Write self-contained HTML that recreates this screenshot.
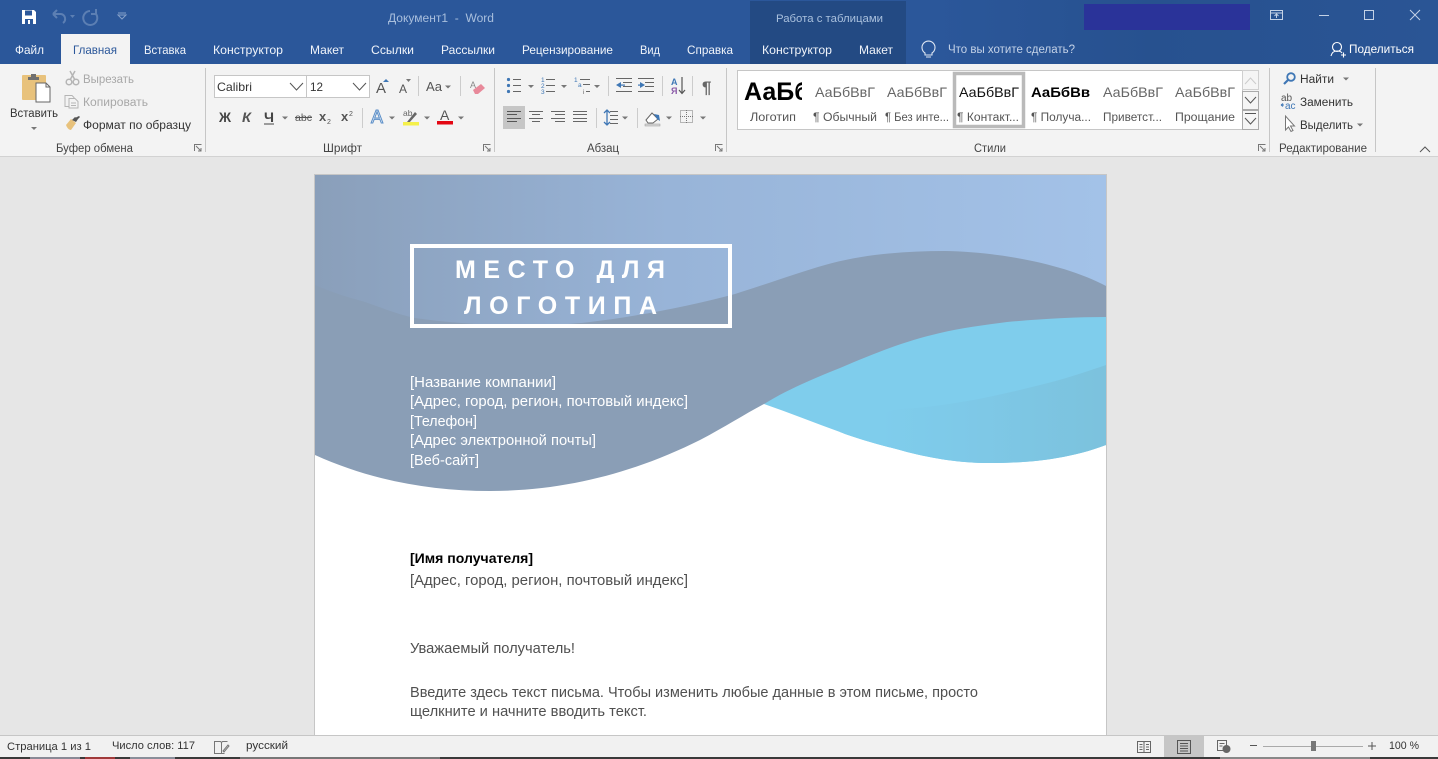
<!DOCTYPE html>
<html lang="ru"><head><meta charset="utf-8"><title>Документ1 - Word</title>
<style>
html,body{margin:0;padding:0;background:#e6e6e6;overflow:hidden;width:1438px;height:759px}
svg{display:block}
text{font-family:"Liberation Sans",sans-serif;font-size:11.5px;fill:#444;white-space:pre}
.tab{fill:#f0f4fa;font-size:12px}
.g{fill:#a8a8a8}
.d{fill:#333}
.lab{fill:#555;font-size:11.5px}
.grp{fill:#444;font-size:11.5px}
.body{font-size:14.5px;fill:#505050}
.wh{font-size:14.5px;fill:#fff}
</style></head><body>
<svg width="1438" height="759" viewBox="0 0 1438 759" xmlns="http://www.w3.org/2000/svg">
<defs>
<linearGradient id="bg" x1="0" x2="1" y1="0" y2="0"><stop offset="0" stop-color="#8a9fba"/><stop offset=".45" stop-color="#98b4d8"/><stop offset="1" stop-color="#a3c2e8"/></linearGradient>
<linearGradient id="tb" x1="0" x2="1" y1="0" y2="0"><stop offset="0" stop-color="#2b579a"/><stop offset=".65" stop-color="#2b579a"/><stop offset=".8" stop-color="#27518f"/><stop offset="1" stop-color="#2a5595"/></linearGradient>
<linearGradient id="band" gradientUnits="userSpaceOnUse" x1="880" x2="1106" y1="0" y2="0"><stop offset="0" stop-color="#7fcdec"/><stop offset=".35" stop-color="#7ec9e8"/><stop offset="1" stop-color="#7cc2dd"/></linearGradient>
<clipPath id="st"><rect x="740" y="72" width="62" height="40"/></clipPath>
</defs>

<!-- title bar -->
<rect x="0" y="0" width="1438" height="64" fill="url(#tb)"/>
<rect x="750" y="1" width="156" height="63" fill="#234a83"/>
<rect x="1084" y="4" width="166" height="26" fill="#2a3399"/>
<!-- save -->
<path d="M22 10h12l2 2v12H22z" fill="#fff"/><rect x="25" y="10.500" width="7" height="5" fill="#2b579a"/><rect x="25" y="19" width="8" height="5" fill="#2b579a"/><rect x="28" y="20" width="2" height="4" fill="#fff"/>
<!-- undo, redo, qat -->
<path d="M53 14l4-4M53 14l4 4M53 14h8a5 5 0 0 1 2 9" fill="none" stroke="#5c7fb3" stroke-width="2"/><path d="M70 15h5l-2.500 3z" fill="#5c7fb3"/>
<path d="M90 11a7 7 0 1 0 6 3M96 9v5h-5" fill="none" stroke="#5c7fb3" stroke-width="2"/>
<path d="M118 13h8M118 15h8l-4 4z" fill="none" stroke="#86a1c9"/>
<text x="388" y="22" textLength="106" lengthAdjust="spacingAndGlyphs" style="fill:#a9bfdd;font-size:11.500px">Документ1  -  Word</text>
<text x="776" y="22" textLength="107" lengthAdjust="spacingAndGlyphs" style="fill:#a9c0dd;font-size:11px">Работа с таблицами</text>
<!-- window controls -->
<rect x="1270.500" y="10.500" width="12" height="9" fill="none" stroke="#c4d2e6"/><path d="M1270 13h13M1276.500 18v-4M1274.500 16l2-2 2 2" fill="none" stroke="#c4d2e6"/>
<path d="M1319 15.500h10" stroke="#c4d2e6"/>
<rect x="1364.500" y="10.500" width="9" height="9" fill="none" stroke="#c4d2e6"/>
<path d="M1410 10l10 10M1420 10l-10 10" stroke="#c4d2e6"/>

<!-- tabs -->
<rect x="61" y="34" width="69" height="31" fill="#f3f3f3"/>
<text class="tab" x="15" y="54" textLength="29" lengthAdjust="spacingAndGlyphs">Файл</text>
<text class="tab" x="73" y="54" textLength="44" lengthAdjust="spacingAndGlyphs" style="fill:#2b579a">Главная</text>
<text class="tab" x="144" y="54" textLength="42" lengthAdjust="spacingAndGlyphs">Вставка</text>
<text class="tab" x="213" y="54" textLength="70" lengthAdjust="spacingAndGlyphs">Конструктор</text>
<text class="tab" x="310" y="54" textLength="34" lengthAdjust="spacingAndGlyphs">Макет</text>
<text class="tab" x="371" y="54" textLength="43" lengthAdjust="spacingAndGlyphs">Ссылки</text>
<text class="tab" x="441" y="54" textLength="54" lengthAdjust="spacingAndGlyphs">Рассылки</text>
<text class="tab" x="522" y="54" textLength="91" lengthAdjust="spacingAndGlyphs">Рецензирование</text>
<text class="tab" x="640" y="54" textLength="20" lengthAdjust="spacingAndGlyphs">Вид</text>
<text class="tab" x="687" y="54" textLength="46" lengthAdjust="spacingAndGlyphs">Справка</text>
<text class="tab" x="762" y="54" textLength="70" lengthAdjust="spacingAndGlyphs">Конструктор</text>
<text class="tab" x="859" y="54" textLength="34" lengthAdjust="spacingAndGlyphs">Макет</text>
<path d="M925 53a6.500 6.500 0 1 1 7 0v2h-7zM926 57h5" fill="none" stroke="#dfe7f3" stroke-width="1.100"/>
<text x="948" y="53" textLength="127" lengthAdjust="spacingAndGlyphs" style="fill:#c5d3e8;font-size:11.500px">Что вы хотите сделать?</text>
<circle cx="1337" cy="47" r="4.500" fill="none" stroke="#fff" stroke-width="1.100"/><path d="M1331 56c1-4 3-5 6-5s4 .5 5 2M1341 55h5M1343.500 52.500v5" fill="none" stroke="#fff" stroke-width="1.100"/>
<text x="1349" y="53" textLength="65" lengthAdjust="spacingAndGlyphs" style="fill:#fff;font-size:12px">Поделиться</text>

<!-- ribbon -->
<rect x="0" y="64" width="1438" height="92" fill="#f3f3f3"/>
<rect x="0" y="156" width="1438" height="1" fill="#d2d2d2"/>
<g fill="#c6c6c6"><rect x="205" y="68" width="1" height="84"/><rect x="494" y="68" width="1" height="84"/><rect x="726" y="68" width="1" height="84"/><rect x="1269" y="68" width="1" height="84"/><rect x="1375" y="68" width="1" height="84"/></g>

<!-- paste -->
<rect x="22" y="75" width="24" height="25" rx="1" fill="#e8c27c"/>
<path d="M28 77h3v-3h5v3h3v3H28z" fill="#6f6f6f"/>
<path d="M36 83h10l4 4v15H36z" fill="#fff" stroke="#666"/><path d="M46 83v4h4" fill="none" stroke="#666"/>
<text x="10" y="117" textLength="48" lengthAdjust="spacingAndGlyphs" class="d">Вставить</text>
<path d="M31 127h6l-3 3z" fill="#777"/>
<!-- scissors -->
<g fill="none" stroke="#b5b5b5" stroke-width="1.500"><circle cx="69" cy="82" r="2.800"/><circle cx="76" cy="82" r="2.800"/><path d="M70 80l5-9M75 80l-5-9"/></g>
<text x="83" y="83" textLength="51" lengthAdjust="spacingAndGlyphs" class="g">Вырезать</text>
<!-- copy -->
<g fill="#f3f3f3" stroke="#b5b5b5"><path d="M65 95.500h7l2 2v9h-9z"/><path d="M69 98.500h6l3 3v6.500h-9z"/></g><path d="M71 103h5M71 105.500h5" stroke="#b5b5b5"/>
<text x="83" y="106" textLength="65" lengthAdjust="spacingAndGlyphs" class="g">Копировать</text>
<!-- brush -->
<path d="M66 125l5-6 5 4-5 7c-2 0-4-2-5-5z" fill="#e8c27c"/><path d="M72 120l3-3 3 2-2 3zM75 118l4-2 1 1-3 3z" fill="#555"/>
<text x="83" y="129" textLength="108" lengthAdjust="spacingAndGlyphs" class="d">Формат по образцу</text>
<text class="grp" x="56" y="152" textLength="77" lengthAdjust="spacingAndGlyphs">Буфер обмена</text>
<g fill="none" stroke="#777"><path d="M194.500 151v-6.500h7M196 146l5 5M201 148v3h-3"/><path d="M483.500 151v-6.500h7M485 146l5 5M490 148v3h-3"/><path d="M715.500 151v-6.500h7M717 146l5 5M722 148v3h-3"/><path d="M1258.500 151v-6.500h7M1260 146l5 5M1265 148v3h-3"/></g>

<!-- font -->
<rect x="214.500" y="75.500" width="92" height="22" fill="#fff" stroke="#c6c6c6"/>
<rect x="306.500" y="75.500" width="63" height="22" fill="#fff" stroke="#c6c6c6"/>
<text x="217" y="91" textLength="35" lengthAdjust="spacingAndGlyphs" class="d" style="font-size:12px">Calibri</text>
<text x="310" y="91" textLength="13" lengthAdjust="spacingAndGlyphs" class="d" style="font-size:12px">12</text>
<path d="M290 83l6.500 7 6.500-7M353 83l6.500 7 6.500-7" fill="none" stroke="#555"/>
<text x="376" y="93" style="font-size:15px;fill:#555">A</text><path d="M383 82l3-3 3 3z" fill="#3f77b5"/>
<text x="399" y="93" style="font-size:12px;fill:#555">A</text><path d="M406 79h5l-2.500 3z" fill="#777"/>
<rect x="418" y="76" width="1" height="20" fill="#ccc"/>
<text x="426" y="91" textLength="16" lengthAdjust="spacingAndGlyphs" style="font-size:13px;fill:#555">Aa</text>
<path d="M445 85.500h6l-3 3z" fill="#777"/>
<rect x="460" y="76" width="1" height="20" fill="#ccc"/>
<text x="470" y="88" style="font-size:9px;fill:#888">A</text><path d="M473 90l8-6 4 4-7 6h-3z" fill="#e8899a"/>

<text x="219" y="122" textLength="12" lengthAdjust="spacingAndGlyphs" style="font-weight:bold;font-size:14px;fill:#444">Ж</text>
<text x="242" y="122" textLength="9" lengthAdjust="spacingAndGlyphs" style="font-weight:bold;font-style:italic;font-size:14px;fill:#555">К</text>
<text x="264" y="122" textLength="10" lengthAdjust="spacingAndGlyphs" style="font-weight:bold;font-size:14px;fill:#444">Ч</text><rect x="264" y="123.500" width="10" height="1" fill="#444"/>
<path d="M282 116.500h6l-3 3z" fill="#777"/>
<text x="295" y="121" textLength="17" lengthAdjust="spacingAndGlyphs" style="font-size:10.500px;fill:#555">abc</text><rect x="295" y="117" width="17" height="1" fill="#555"/>
<text x="319" y="121" style="font-weight:bold;font-size:13px;fill:#555">x</text><text x="327" y="124" style="font-size:7px;fill:#555">2</text>
<text x="341" y="121" style="font-weight:bold;font-size:13px;fill:#555">x</text><text x="349" y="116" style="font-size:7px;fill:#555">2</text>
<rect x="362" y="108" width="1" height="20" fill="#ccc"/>
<text x="371" y="123" style="font-size:18px;fill:#dfeaf6;stroke:#5b8ec7;stroke-width:1">A</text>
<path d="M389 116.500h6l-3 3z" fill="#777"/>
<text x="403" y="116" style="font-size:8.500px;fill:#666">ab</text><path d="M407 122l8-10 2 2-8 9z" fill="#666"/><rect x="403" y="122" width="16" height="3.500" fill="#f5f04a"/>
<path d="M424 116.500h6l-3 3z" fill="#777"/>
<text x="440" y="120" style="font-size:14px;fill:#555">A</text><rect x="437" y="121" width="16" height="3.500" fill="#e30613"/>
<path d="M458 116.500h6l-3 3z" fill="#777"/>
<text class="grp" x="323" y="152" textLength="39" lengthAdjust="spacingAndGlyphs">Шрифт</text>

<!-- paragraph row 1 -->
<g stroke="#666" fill="none">
<path d="M513 79.500h8M513 85.500h8M513 91.500h8"/>
<path d="M546 79.500h9M546 85.500h9M546 91.500h9"/>
<path d="M580 79.500h10M583 84.500h7M586 91.500h4"/>
<path d="M616 78.500h16M623 82.500h9M623 86.500h9M616 91.500h16"/>
<path d="M638 78.500h16M645 82.500h9M645 86.500h9M638 91.500h16"/>
</g>
<g fill="#3f77b5"><circle cx="508.500" cy="79.500" r="1.600"/><circle cx="508.500" cy="85.500" r="1.600"/><circle cx="508.500" cy="91.500" r="1.600"/>
<path d="M616 85l5-3v6z"/><rect x="620" y="84.500" width="5" height="1.200"/><path d="M645 85l-5-3v6z"/><rect x="638" y="84.500" width="5" height="1.200"/></g>
<text x="541" y="82" style="font-size:6.500px;fill:#3f77b5">1</text><text x="541" y="88" style="font-size:6.500px;fill:#3f77b5">2</text><text x="541" y="94" style="font-size:6.500px;fill:#3f77b5">3</text>
<text x="574" y="82" style="font-size:6.500px;fill:#3f77b5">1</text><text x="578" y="87" style="font-size:6.500px;fill:#3f77b5">a</text><text x="583" y="94" style="font-size:6.500px;fill:#666">i</text>
<g fill="#777"><path d="M528 85h6l-3 3zM561 85h6l-3 3zM594 85h6l-3 3z"/></g>
<g fill="#ccc"><rect x="608" y="76" width="1" height="20"/><rect x="662" y="76" width="1" height="20"/><rect x="692" y="76" width="1" height="20"/><rect x="596" y="108" width="1" height="20"/><rect x="637" y="108" width="1" height="20"/></g>
<text x="671" y="85" style="font-weight:bold;font-size:9px;fill:#3f77b5">A</text><text x="671" y="94" style="font-weight:bold;font-size:9px;fill:#8a5aa8">Я</text>
<path d="M682 77v16M679 90l3 3.500 3-3.500" fill="none" stroke="#555" stroke-width="1.200"/>
<text x="702" y="93" style="font-size:17px;font-weight:bold;fill:#666">¶</text>
<!-- paragraph row 2 -->
<rect x="503" y="106" width="22" height="23" fill="#c6c6c6"/>
<g fill="none" stroke="#666"><path d="M507 111.500h14M507 114.500h10M507 118.500h14M507 121.500h10" stroke="#555"/>
<path d="M529 111.500h14M532 114.500h8M529 118.500h14M532 121.500h8"/>
<path d="M551 111.500h14M555 114.500h10M551 118.500h14M555 121.500h10"/>
<path d="M573 111.500h14M573 114.500h14M573 118.500h14M573 121.500h14"/></g>
<path d="M607 110v15M604 113l3-3 3 3M604 122l3 3 3-3" fill="none" stroke="#3f77b5" stroke-width="1.300"/>
<path d="M610 111.500h8M610 115.500h8M610 119.500h8M610 123.500h8" stroke="#666" fill="none"/>
<path d="M622 116.500h6l-3 3z" fill="#777"/>
<path d="M646 120l6-7 6 6-5 4h-5z" fill="#fff" stroke="#666"/><path d="M654 114l5 1 1 6-3-2z" fill="#3f77b5"/><rect x="645" y="124" width="15" height="2" fill="#d8d8d8" stroke="#999" stroke-width=".5"/>
<path d="M666 116.500h6l-3 3z" fill="#777"/>
<rect x="680.500" y="110.500" width="12" height="12" fill="none" stroke="#777" stroke-dasharray="1 1"/><path d="M686.500 110v13M680 116.500h13" stroke="#777" stroke-dasharray="1 1"/>
<path d="M700 116.500h6l-3 3z" fill="#777"/>
<text class="grp" x="587" y="152" textLength="32" lengthAdjust="spacingAndGlyphs">Абзац</text>

<!-- styles -->
<rect x="737.500" y="70.500" width="505" height="59" fill="#fff" stroke="#c6c6c6"/>
<rect x="954.500" y="73.500" width="69" height="53" fill="#fff" stroke="#bababa" stroke-width="3.500"/>
<g clip-path="url(#st)"><text x="744" y="100" style="font-weight:bold;font-size:25px;fill:#000">АаБб</text></g>
<text x="815" y="97" textLength="60" lengthAdjust="spacingAndGlyphs" style="font-size:14px;fill:#666">АаБбВвГ</text>
<text x="887" y="97" textLength="60" lengthAdjust="spacingAndGlyphs" style="font-size:14px;fill:#666">АаБбВвГ</text>
<text x="959" y="97" textLength="60" lengthAdjust="spacingAndGlyphs" style="font-size:14px;fill:#111">АаБбВвГ</text>
<text x="1031" y="97" textLength="59" lengthAdjust="spacingAndGlyphs" style="font-size:14px;font-weight:bold;fill:#000">АаБбВв</text>
<text x="1103" y="97" textLength="60" lengthAdjust="spacingAndGlyphs" style="font-size:14px;fill:#666">АаБбВвГ</text>
<text x="1175" y="97" textLength="60" lengthAdjust="spacingAndGlyphs" style="font-size:14px;fill:#666">АаБбВвГ</text>
<text class="lab" x="750" y="121" textLength="46" lengthAdjust="spacingAndGlyphs">Логотип</text>
<text class="lab" x="813" y="121" textLength="64" lengthAdjust="spacingAndGlyphs">¶ Обычный</text>
<text class="lab" x="885" y="121" textLength="64" lengthAdjust="spacingAndGlyphs">¶ Без инте...</text>
<text class="lab" x="957" y="121" textLength="62" lengthAdjust="spacingAndGlyphs">¶ Контакт...</text>
<text class="lab" x="1031" y="121" textLength="60" lengthAdjust="spacingAndGlyphs">¶ Получа...</text>
<text class="lab" x="1103" y="121" textLength="59" lengthAdjust="spacingAndGlyphs">Приветст...</text>
<text class="lab" x="1175" y="121" textLength="60" lengthAdjust="spacingAndGlyphs">Прощание</text>
<rect x="1242.500" y="70.500" width="16" height="19" fill="#f5f5f5" stroke="#d0d0d0"/>
<rect x="1242.500" y="91.500" width="16" height="18" fill="#f5f5f5" stroke="#aaa"/>
<rect x="1242.500" y="110.500" width="16" height="19" fill="#f5f5f5" stroke="#aaa"/>
<path d="M1245 84l5.500-6 5.500 6" fill="none" stroke="#ccc"/><path d="M1245 97l5.500 6 5.500-6" fill="none" stroke="#555"/><path d="M1245 113.500h11M1245 118l5.500 6 5.500-6" fill="none" stroke="#555"/>
<text class="grp" x="974" y="152" textLength="32" lengthAdjust="spacingAndGlyphs">Стили</text>

<!-- editing -->
<circle cx="1291" cy="77" r="3.800" fill="none" stroke="#3f77b5" stroke-width="1.800"/><path d="M1288 80l-4 4" stroke="#3f77b5" stroke-width="2.200"/>
<text x="1300" y="83" textLength="34" lengthAdjust="spacingAndGlyphs" class="d">Найти</text>
<path d="M1343 77.500h6l-3 3z" fill="#777"/>
<text x="1281" y="101" style="font-size:10px;fill:#555">ab</text>
<text x="1285" y="109" style="font-size:10px;fill:#3f77b5">ac</text>
<path d="M1281 105h3M1281 105l2-1.500M1281 105l2 1.500" stroke="#3f77b5" fill="none"/>
<text x="1300" y="106" textLength="53" lengthAdjust="spacingAndGlyphs" class="d">Заменить</text>
<path d="M1285.500 116v14l3-3 2.500 4.500 2-1-2.500-4.500h4z" fill="#fff" stroke="#777"/>
<text x="1300" y="129" textLength="53" lengthAdjust="spacingAndGlyphs" class="d">Выделить</text>
<path d="M1357 123.500h6l-3 3z" fill="#777"/>
<text class="grp" x="1279" y="152" textLength="88" lengthAdjust="spacingAndGlyphs">Редактирование</text>
<path d="M1420 152l5-5 5 5" fill="none" stroke="#555"/>

<!-- document page -->
<rect x="0" y="157" width="1438" height="579" fill="#e6e6e6"/>
<rect x="314.500" y="174.500" width="792" height="570" fill="#fff" stroke="#c6c6c6"/>
<rect x="315" y="175" width="791" height="155" fill="url(#bg)"/>
<path d="M315 285C330 292 350 298 365 302C385 309 400 315 415 318C470 326 540 328 590 322C640 316 690 306 735 294C770 283 800 272 825 265C860 255 900 251 945 251C1000 252 1065 264 1106 286V330L764 404C745 414 725 427 700 440C640 470 570 491 490 491C430 491 370 480 315 455Z" fill="#8a9eb6"/>
<path d="M764 404C785 391 810 380 840 368C875 353 905 341 940 333C960 328 985 325 1007 322C1040 319 1075 317 1106 317V445C1090 451 1075 455 1057 458C1035 462 1010 463 990 463C960 463 935 459 907 452C885 446 860 440 840 432C815 423 790 413 764 404Z" fill="#7fcdec"/>
<path d="M900 409C925 408 950 404 973 400C995 396 1020 390 1040 385C1065 379 1085 372 1106 365V445C1090 451 1075 455 1057 458C1035 462 1010 463 990 463C960 463 935 459 907 452C885 446 860 440 840 432C860 420 880 412 900 409Z" fill="url(#band)"/>
<rect x="412" y="246" width="318" height="80" fill="none" stroke="#fff" stroke-width="4"/>
<text x="455" y="278" textLength="210" lengthAdjust="spacing" style="font-weight:bold;font-size:25px;fill:#fff">МЕСТО ДЛЯ</text>
<text x="464" y="314" textLength="193" lengthAdjust="spacing" style="font-weight:bold;font-size:25px;fill:#fff">ЛОГОТИПА</text>
<text class="wh" x="410" y="387" textLength="146" lengthAdjust="spacingAndGlyphs">[Название компании]</text>
<text class="wh" x="410" y="406" textLength="278" lengthAdjust="spacingAndGlyphs">[Адрес, город, регион, почтовый индекс]</text>
<text class="wh" x="410" y="426" textLength="67" lengthAdjust="spacingAndGlyphs">[Телефон]</text>
<text class="wh" x="410" y="445" textLength="186" lengthAdjust="spacingAndGlyphs">[Адрес электронной почты]</text>
<text class="wh" x="410" y="465" textLength="69" lengthAdjust="spacingAndGlyphs">[Веб-сайт]</text>
<text x="410" y="563" textLength="123" lengthAdjust="spacingAndGlyphs" style="font-size:14px;font-weight:bold;fill:#000">[Имя получателя]</text>
<text class="body" x="410" y="585" textLength="278" lengthAdjust="spacingAndGlyphs">[Адрес, город, регион, почтовый индекс]</text>
<text class="body" x="410" y="653" textLength="165" lengthAdjust="spacingAndGlyphs">Уважаемый получатель!</text>
<text class="body" x="410" y="697" textLength="568" lengthAdjust="spacingAndGlyphs">Введите здесь текст письма. Чтобы изменить любые данные в этом письме, просто</text>
<text class="body" x="410" y="716" textLength="237" lengthAdjust="spacingAndGlyphs">щелкните и начните вводить текст.</text>

<!-- status bar -->
<rect x="0" y="735" width="1438" height="1" fill="#c6c6c6"/>
<rect x="0" y="736" width="1438" height="21" fill="#f1f1f1"/>
<rect x="0" y="757" width="1438" height="2" fill="#3a3a3a"/>
<rect x="30" y="757" width="50" height="2" fill="#8a8a96"/><rect x="85" y="757" width="30" height="2" fill="#a03a3a"/><rect x="130" y="757" width="45" height="2" fill="#8a8f9a"/><rect x="240" y="757" width="200" height="2" fill="#777"/><rect x="1220" y="757" width="150" height="2" fill="#888"/>
<text x="7" y="750" textLength="84" lengthAdjust="spacingAndGlyphs" class="d" style="font-size:11px">Страница 1 из 1</text>
<text x="112" y="749" textLength="83" lengthAdjust="spacingAndGlyphs" class="d" style="font-size:11px">Число слов: 117</text>
<path d="M214.500 741.500h6l1 1v11h-7zM221.500 742.500l1-1h5M221.500 753.500h3" fill="none" stroke="#777"/><path d="M223 751l5-6 1 1-5 6z" fill="none" stroke="#777"/>
<text x="246" y="749" textLength="42" lengthAdjust="spacingAndGlyphs" class="d" style="font-size:11px">русский</text>
<rect x="1164" y="736" width="40" height="21" fill="#c6c6c6"/>
<path d="M1137.500 741.500h6l.5 1 .5-1h6v11h-13zM1144 742.500v10M1139.500 744.500h3M1139.500 747h3M1139.500 749.500h3M1146 744.500h3M1146 747h3M1146 749.500h3" fill="none" stroke="#666"/>
<path d="M1177.500 740.500h13v13h-13zM1180 743.500h8M1180 746h8M1180 748.500h8M1180 751h8" fill="none" stroke="#555"/>
<path d="M1217.500 740.500h9v10h-9zM1219.500 743.500h5M1219.500 746h3" fill="none" stroke="#666"/><circle cx="1226.500" cy="749" r="4" fill="#666"/>
<rect x="1250" y="745" width="7" height="1" fill="#555"/>
<rect x="1263" y="746" width="100" height="1" fill="#aaa"/>
<rect x="1311" y="741" width="5" height="10" fill="#777"/>
<path d="M1368 746h8M1372 742v8" stroke="#555" fill="none"/>
<text x="1389" y="749" textLength="30" lengthAdjust="spacingAndGlyphs" class="d" style="font-size:11px">100 %</text>
</svg>
</body></html>
